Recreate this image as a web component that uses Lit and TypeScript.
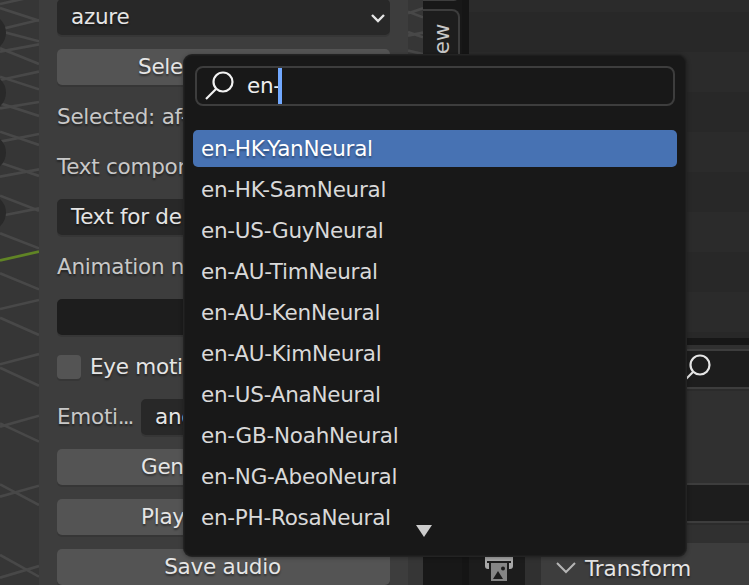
import { LitElement, html, css, svg } from "lit";
import { customElement, state } from "lit/decorators.js";
import { classMap } from "lit/directives/class-map.js";

const VOICES = [
  "en-HK-YanNeural",
  "en-HK-SamNeural",
  "en-US-GuyNeural",
  "en-AU-TimNeural",
  "en-AU-KenNeural",
  "en-AU-KimNeural",
  "en-US-AnaNeural",
  "en-GB-NoahNeural",
  "en-NG-AbeoNeural",
  "en-PH-RosaNeural",
];

// Floor grid lines as y at the left edge and y at the right edge, three units per pixel.
const GRID: [number, number][] = [
  [12, -14], [24, 62], [88, 60], [93, 124], [155, 133], [145, 192], [240, 215], [230, 268],
  [325, 306], [310, 348], [425, 402], [395, 435], [530, 508], [488, 528], [587, 632],
  [648, 625], [700, 745], [820, 868], [927, 900], [953, 1005], [1093, 1062], [1103, 1157],
  [1280, 1247], [1270, 1325], [1490, 1457], [1453, 1515], [1733, 1698], [1665, 1730],
];

const magnifier = svg`<circle cx="19" cy="11" r="9.5"/><path d="M12 18 2 28"/>`;

@customElement("voice-menu")
export class VoiceMenu extends LitElement {
  @state() private active = 0;

  static styles = css`
    :host { display: block; box-sizing: border-box; background: #181818; border: 1px solid #1d1d1d; border-radius: 8px;
      box-shadow: 0 0 0 1px #232323, 0 1px 4px 1px rgba(0, 0, 0, .3); padding: 10px 8px; position: relative; }
    .search { box-sizing: border-box; display: flex; height: 40px; margin: 0 2px; border: 2px solid #3d3d3d; border-radius: 8px; }
    svg { fill: none; stroke: #f2f2f2; stroke-width: 2.2; }
    .lens { width: 30px; height: 30px; margin: 3px 0 0 7px; }
    .query { margin-left: 13px; line-height: 36px; color: #eee; }
    .caret { width: 4px; height: 36px; margin-left: -3px; background: #71a8ff; }
    .list { margin-top: 24px; display: grid; gap: 4px; }
    .item { height: 37px; line-height: 37px; padding-left: 8px; border-radius: 5px; color: #d9d9d9; white-space: nowrap; }
    .on { background: #4772b3; color: #fff; text-shadow: 0 2px 2px rgba(0, 0, 0, .35); }
    .more { position: absolute; left: 231px; bottom: 18px; width: 16px; height: 12px; background: #ccc; clip-path: polygon(0 0, 100% 0, 50% 100%); }
  `;

  render() {
    return html`
      <div class="search">
        <svg class="lens" viewBox="0 0 30 30">${magnifier}</svg>
        <span class="query">en-</span><span class="caret"></span>
      </div>
      <div class="list">
        ${VOICES.map((v, i) => html`<div class=${classMap({ item: true, on: i === this.active })}
          @mouseenter=${() => (this.active = i)}>${v}</div>`)}
      </div>
      <div class="more"></div>`;
  }
}

@customElement("app-root")
export class AppRoot extends LitElement {
  static styles = css`
    :host { display: block; position: relative; width: 749px; height: 585px; overflow: hidden; background: #393939;
      font: 21.5px "DejaVu Sans", sans-serif; letter-spacing: -.26px; color: #e5e5e5; }
    .screen { display: grid; grid-template-columns: 39px 369px 15px 46px 280px; height: 585px; }
    .view { display: block; width: 100%; height: 585px; background: #363636; }
    .view path { stroke: #484848; stroke-width: 8; fill: none; }
    .view .axis { stroke: #608425; stroke-width: 8; }
    .view circle { fill: #292929; }
    .panel { background: #3d3d3d; padding: 0 18px; height: 585px; box-sizing: border-box; overflow: hidden; }
    .rows { display: grid; grid-auto-rows: 36px; gap: 14px; margin-top: -1px; }
    .row { line-height: 36px; white-space: nowrap; box-sizing: border-box; text-shadow: 0 2px 2px rgba(0, 0, 0, .45); }
    .label { color: #c8c8c8; }
    .field, .button { border-radius: 5px; box-shadow: 0 2px 0 #363636; }
    .field { background: #282828; padding-left: 14px; color: #e5e5e5; }
    .button { background: #545454; text-align: center; }
    .drop { display: flex; justify-content: space-between; padding-right: 4px; }
    .chev { width: 16px; height: 12px; margin-top: 13px; fill: none; stroke: #e5e5e5; stroke-width: 2.4; }
    .dark { background: #1d1d1d; }
    .left { text-align: left; padding-left: 84px; }
    .left.pick { padding-left: 81px; }
    .last { padding-right: 2px; }
    .check { display: flex; gap: 9px; }
    .box { width: 24px; height: 24px; margin-top: 6px; border-radius: 4px; background: #545454; box-shadow: 0 2px 0 #363636; }
    .split { display: grid; grid-template-columns: 84px 1fr; }
    .dots { letter-spacing: -2px; }
    .tabs { background: #181818; display: flex; flex-direction: column; box-shadow: inset -7px 0 #151515; overflow: hidden; }
    .tab { width: 37px; box-sizing: border-box; border: solid #3d3d3d; border-width: 2px 2px 2px 0; background: #1d1d1d; border-radius: 0 8px 8px 0; }
    .first { height: 13px; margin-top: -12px; }
    .second { height: 210px; margin-top: 8px; writing-mode: vertical-rl; transform: rotate(180deg); border-width: 2px 0 2px 2px;
      border-radius: 8px 0 0 8px; text-align: right; line-height: 37px; color: #c8c8c8; padding-bottom: 13px; }
    .side { display: flex; flex-direction: column; height: 585px; overflow: hidden; }
    .outliner { height: 338px; flex: none; background: repeating-linear-gradient(#282828 0 40px, #2b2b2b 40px 80px) 0 -68px / 100% 560px; }
    .gapbar { height: 7px; flex: none; background: #171717; }
    .props { flex: 1; display: grid; grid-template-columns: 56px 16px 1fr; grid-template-rows: 198px 42px; background: #303030; }
    .fields { grid-column: 1 / 4; padding-top: 4px; }
    .wide { height: 36px; border: solid #3d3d3d; border-width: 2px 0; background: #1d1d1d; display: flex; box-shadow: 0 2px 0 #2b2b2b; }
    .wide + .wide { margin-top: 94px; }
    .lens { width: 30px; height: 30px; margin: 3px 0 0 212px; fill: none; stroke: #e5e5e5; stroke-width: 2.2; }
    .nav { background: #1c1c1c; display: flex; padding: 13px 0 0 16px; }
    .printer { width: 28px; height: 25px; }
    .transform { grid-column: 3; background: #3d3d3d; display: flex; line-height: 51px; letter-spacing: -.1px; text-shadow: 0 2px 2px rgba(0, 0, 0, .45); }
    .open { width: 20px; height: 12px; margin: 19px 9px 0 15px; fill: none; stroke: #b5b5b5; stroke-width: 2; }
    .popup { position: absolute; left: 184px; top: 55px; width: 502px; height: 501px; }
  `;

  render() {
    return html`
      <div class="screen">
        <svg class="view" viewBox="0 0 117 1755" preserveAspectRatio="none">
          ${GRID.map(([a, b]) => svg`<path d="M0 ${a}L117 ${b}"/>`)}
          <path class="axis" d="M0 781L117 755"/>
          ${[98, 278, 458, 638].map((y) => svg`<circle cx="-38" cy=${y} r="56"/>`)}
        </svg>
        <div class="panel"><div class="rows">
          <div class="row field drop">azure<svg class="chev" viewBox="0 0 16 12"><path d="M2 3l6 6 6-6"/></svg></div>
          <div class="row button left pick">Sele</div>
          <div class="row label">Selected: af-</div>
          <div class="row label">Text compon</div>
          <div class="row field">Text for de</div>
          <div class="row label">Animation n</div>
          <div class="row field dark"></div>
          <div class="row check"><span class="box"></span>Eye moti</div>
          <div class="row split label"><span>Emoti<span class="dots">...</span></span><div class="row field">ang</div></div>
          <div class="row button left">Gen</div>
          <div class="row button left">Play</div>
          <div class="row button last">Save audio</div>
        </div></div>
        <svg class="view" viewBox="0 0 45 1755" preserveAspectRatio="none">
          <path d="M0 40L45 25M0 35L45 52M0 107L45 98M0 96L45 112M0 152L45 162"/>
        </svg>
        <div class="tabs"><div class="tab first"></div><div class="tab second">View</div></div>
        <div class="side">
          <div class="outliner"></div>
          <div class="gapbar"></div>
          <div class="props">
            <div class="fields">
              <div class="wide"><svg class="lens" viewBox="0 0 30 30">${magnifier}</svg></div>
              <div class="wide"></div>
            </div>
            <div class="nav"><svg class="printer" viewBox="0 0 28 25">
              <path fill="#a8a8a8" d="M0 0H28V10Q28 13 25 13H24V6H4V13H3Q0 13 0 10Z"/>
              <path fill="#858585" d="M6 7H22V25H6Z"/>
              <path fill="#1c1c1c" d="M2 5H26V7H2ZM8 23L13 15 18 23Z"/><circle cx="18" cy="12.5" r="2" fill="#1c1c1c"/>
            </svg></div>
            <div class="transform"><svg class="open" viewBox="0 0 20 12"><path d="M1 1l9 9 9-9"/></svg>Transform</div>
          </div>
        </div>
      </div>
      <voice-menu class="popup"></voice-menu>`;
  }
}
